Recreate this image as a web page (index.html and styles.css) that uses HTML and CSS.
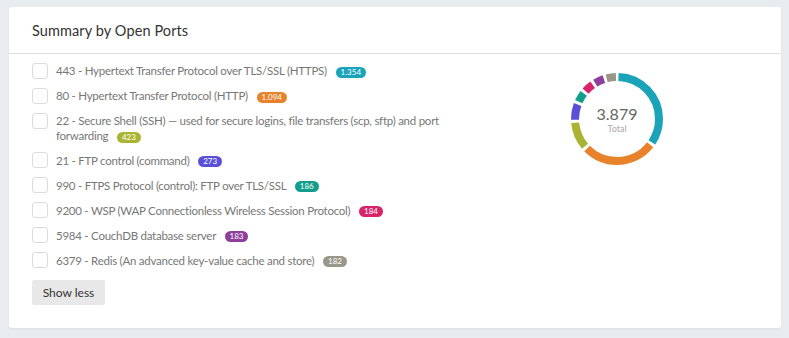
FILE: index.html
```html
<!DOCTYPE html>
<html>
<head>
  <title>Summary by Open Ports</title>
  <link rel="stylesheet" href="styles.css">
</head>
<body>
  <div class="card">
    <div class="card-header">
      <h2>Summary by Open Ports</h2>
    </div>
    <div class="card-body">
      <div class="port-list">
        <label class="port"><span class="check"></span><span class="port-text">443 - Hypertext Transfer Protocol over TLS/SSL (HTTPS) <span class="badge teal">1.354</span></span></label>
        <label class="port"><span class="check"></span><span class="port-text">80 - Hypertext Transfer Protocol (HTTP) <span class="badge orange">1.094</span></span></label>
        <label class="port"><span class="check"></span><span class="port-text">22 - Secure Shell (SSH) — used for secure logins, file transfers (scp, sftp) and port forwarding <span class="badge olive">423</span></span></label>
        <label class="port"><span class="check"></span><span class="port-text">21 - FTP control (command) <span class="badge blue">273</span></span></label>
        <label class="port"><span class="check"></span><span class="port-text">990 - FTPS Protocol (control): FTP over TLS/SSL <span class="badge green">186</span></span></label>
        <label class="port"><span class="check"></span><span class="port-text">9200 - WSP (WAP Connectionless Wireless Session Protocol) <span class="badge pink">184</span></span></label>
        <label class="port"><span class="check"></span><span class="port-text">5984 - CouchDB database server <span class="badge purple">183</span></span></label>
        <label class="port"><span class="check"></span><span class="port-text">6379 - Redis (An advanced key-value cache and store) <span class="badge gray">182</span></span></label>
        <button class="show-less">Show less</button>
      </div>

      <div class="chart">
        <svg width="100" height="100" viewBox="0 0 100 100">
          <g transform="rotate(-90 50 50)" fill="none" stroke-width="8">
            <circle cx="50" cy="50" r="42" stroke="#1aa3b9" stroke-dasharray="89.1 300" stroke-dashoffset="-1.5"></circle>
            <circle cx="50" cy="50" r="42" stroke="#e8832b" stroke-dasharray="71.4 300" stroke-dashoffset="-93.6"></circle>
            <circle cx="50" cy="50" r="42" stroke="#a9b532" stroke-dasharray="25.8 300" stroke-dashoffset="-168"></circle>
            <circle cx="50" cy="50" r="42" stroke="#5a50d8" stroke-dasharray="15.6 300" stroke-dashoffset="-196.8"></circle>
            <circle cx="50" cy="50" r="42" stroke="#139d8c" stroke-dasharray="9.7 300" stroke-dashoffset="-215.4"></circle>
            <circle cx="50" cy="50" r="42" stroke="#d8246a" stroke-dasharray="9.5 300" stroke-dashoffset="-228"></circle>
            <circle cx="50" cy="50" r="42" stroke="#8d3f9b" stroke-dasharray="9.5 300" stroke-dashoffset="-240.6"></circle>
            <circle cx="50" cy="50" r="42" stroke="#9b968a" stroke-dasharray="9.4 300" stroke-dashoffset="-253"></circle>
          </g>
        </svg>
        <div class="chart-total">
          <div class="total-value">3.879</div>
          <div class="total-label">Total</div>
        </div>
      </div>
    </div>
  </div>
</body>
</html>
```

FILE: styles.css
```css
body {
  font-family: Lato, "Open Sans", sans-serif;
  margin: 0;
  padding: 7px 8px 9px 9px;
  background-color: #e9ecef;
}

.card {
  background-color: #ffffff;
  border-radius: 3px;
  box-shadow: 0 1px 2px rgba(0, 0, 0, 0.05);
}

.card-header {
  height: 46px;
  display: flex;
  align-items: center;
  padding: 0 23px;
  border-bottom: 1px solid #dedede;
}

.card-header h2 {
  margin: 0;
  font-size: 14.5px;
  font-weight: 400;
  color: #333;
  letter-spacing: 0.1px;
}

.card-body {
  display: flex;
  padding: 4px 23px 23px 23px;
}

.port-list {
  flex: 1;
}

.port {
  display: flex;
  align-items: flex-start;
  padding: 4.5px 0;
  font-size: 11.5px;
  line-height: 15px;
  letter-spacing: -0.25px;
  color: #777;
}

.check {
  flex: none;
  width: 14px;
  height: 14px;
  margin-right: 8px;
  border: 1px solid #dcdcdc;
  border-radius: 3px;
}

.port-text {
  max-width: 395px;
  padding-top: 0.5px;
}

.badge {
  display: inline-block;
  margin-left: 6px;
  padding: 0 5px;
  height: 11px;
  line-height: 11px;
  font-size: 8px;
  letter-spacing: 0;
  color: #ffffff;
  border-radius: 6px;
  vertical-align: middle;
}

.teal { background-color: #1aa3b9; }
.orange { background-color: #e8832b; }
.olive { background-color: #a9b532; }
.blue { background-color: #5a50d8; }
.green { background-color: #139d8c; }
.pink { background-color: #d8246a; }
.purple { background-color: #8d3f9b; }
.gray { background-color: #9b968a; }

.show-less {
  margin-top: 7px;
  width: 73px;
  height: 25px;
  border: none;
  border-radius: 2px;
  background-color: #e8e8e8;
  font-family: inherit;
  font-size: 12px;
  color: #333;
}

.chart {
  position: relative;
  width: 100px;
  height: 100px;
  margin: 11px 91px 0 0;
}

.chart svg {
  display: block;
}

.chart-total {
  position: absolute;
  inset: 0;
  display: flex;
  flex-direction: column;
  align-items: center;
  justify-content: center;
  color: #666;
}

.total-value {
  font-size: 16px;
  line-height: 18px;
}

.total-label {
  font-size: 9px;
  color: #aaa;
}
```
